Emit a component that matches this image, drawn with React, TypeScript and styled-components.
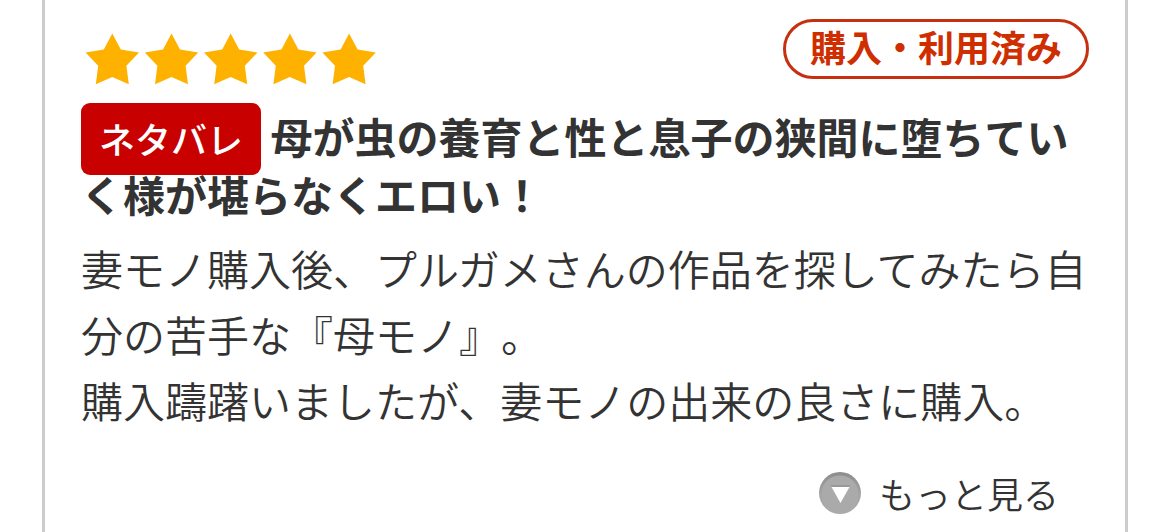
import React from "react";
import styled, { createGlobalStyle } from "styled-components";

const GlobalStyle = createGlobalStyle`
  * { box-sizing: border-box; }
  body {
    margin: 0;
    background: #fff;
    color: #333;
    font-family: "Noto Sans CJK JP", "Noto Sans", sans-serif;
    text-spacing-trim: space-all;
  }
`;

const Page = styled.main`
  padding: 0 42px;
`;

const ReviewCard = styled.article`
  min-height: 100vh;
  padding: 19px 36px 10px;
  border: solid #ccc;
  border-width: 0 3px;
`;

const ReviewHeader = styled.header`
  display: flex;
  align-items: flex-start;
  justify-content: space-between;
`;

const Stars = styled.svg`
  width: 300px;
  height: 54px;
  margin-top: 13px;
  fill: #ffb100;
`;

const PurchasedBadge = styled.span`
  padding: 0 24px 6px;
  border: 3px solid #c63010;
  border-radius: 30px;
  color: #cf2e00;
  font-size: 36px;
  font-weight: 700;
  line-height: 48px;
`;

const Title = styled.h2`
  margin: 21px 0 0;
  font-size: 42px;
  font-weight: 700;
  line-height: 58px;
`;

const SpoilerTag = styled.span`
  padding: 9px 18px 11px;
  border-radius: 9px;
  background: #c80000;
  color: #fff;
  font-size: 36px;
  font-weight: 500;
  line-height: 1;
`;

const Body = styled.p`
  height: 210px;
  margin: 12px 0 0;
  overflow: hidden;
  font-size: 42px;
  font-weight: 350;
  line-height: 66px;
`;

const ReviewFooter = styled.footer`
  display: flex;
  justify-content: flex-end;
  padding: 21px 30px 0 0;
`;

const MoreButton = styled.button`
  display: flex;
  align-items: center;
  gap: 18px;
  padding: 0;
  border: 0;
  background: none;
  color: inherit;
  font-family: inherit;
  font-size: 36px;
  font-weight: 350;
  line-height: 54px;
  cursor: pointer;
`;

const MoreIcon = styled.svg`
  width: 42px;
  height: 42px;
`;

const STAR_PATH =
  "M31.3 1.5 L39.8 17.4 L58 20.6 L45.4 33.8 L47.8 52.3 L31.3 45 L14.8 52.3 L17.2 33.8 L4.6 20.6 L22.8 17.4 Z";

function Rating({ value }: { value: number }) {
  return (
    <Stars viewBox="0 0 300 54" role="img" aria-label={`${value} / 5`}>
      {Array.from({ length: value }, (_, i) => (
        <path key={i} d={STAR_PATH} transform={`translate(${i * 59.2} 0)`} />
      ))}
    </Stars>
  );
}

export default function App() {
  return (
    <>
      <GlobalStyle />
      <Page>
        <ReviewCard lang="ja">
          <ReviewHeader>
            <Rating value={5} />
            <PurchasedBadge>購入・利用済み</PurchasedBadge>
          </ReviewHeader>
          <Title>
            <SpoilerTag>ネタバレ</SpoilerTag>{" "}
            母が虫の養育と性と息子の狭間に堕ちていく様が堪らなくエロい！
          </Title>
          <Body>
            妻モノ購入後、プルガメさんの作品を探してみたら自分の苦手な『母モノ』。
            <br />
            購入躊躇いましたが、妻モノの出来の良さに購入。
          </Body>
          <ReviewFooter>
            <MoreButton type="button">
              <MoreIcon viewBox="0 0 42 42" aria-hidden="true">
                <defs>
                  <linearGradient id="rim" x1="0" y1="0" x2="0" y2="1">
                    <stop offset="0" stopColor="#8c8c8c" />
                    <stop offset="0.5" stopColor="#a2a2a2" />
                    <stop offset="1" stopColor="#adadad" />
                  </linearGradient>
                </defs>
                <circle cx="21" cy="21" r="21" fill="url(#rim)" />
                <circle cx="21" cy="22" r="18.6" fill="#aaa" />
                <path d="M12 13 H31 L30 16 H13 Z" fill="#999" />
                <path d="M12.5 15 H30.5 L21.5 31 Z" fill="#fff" />
              </MoreIcon>
              もっと見る
            </MoreButton>
          </ReviewFooter>
        </ReviewCard>
      </Page>
    </>
  );
}
